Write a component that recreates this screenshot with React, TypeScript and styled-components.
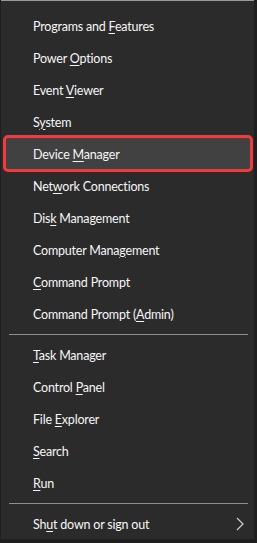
import React from "react";
import styled, { createGlobalStyle } from "styled-components";

const Global = createGlobalStyle`
  html, body { margin: 0; padding: 0; background: #1f1f1f; }
  body { width: 257px; height: 543px; overflow: hidden; }
`;

const Menu = styled.nav`
  width: 253px;
  height: 539px;
  margin-left: 1px;
  box-sizing: border-box;
  background: #2b2b2b;
  border-top: 1px solid #9a9a9a;
  padding-top: 9px;
  display: flex;
  flex-direction: column;
  font-family: Lato, "Segoe UI", sans-serif;
  font-size: 12.5px;
  letter-spacing: -0.2px;
  color: #f6f6f6;
`;

const Item = styled.div<{ $active?: boolean }>`
  position: relative;
  height: 32px;
  flex: 0 0 32px;
  display: flex;
  align-items: center;
  padding-left: 32px;
  padding-right: 10px;
  justify-content: space-between;
  &::before {
    content: "";
    display: ${(p) => (p.$active ? "block" : "none")};
    position: absolute;
    top: -3px;
    bottom: -2px;
    left: 2px;
    right: 1px;
    background: #414141;
    border: 3px solid #f03b3e;
    border-radius: 5px;
  }
`;

const Label = styled.span`
  position: relative;
  white-space: nowrap;
  u { text-underline-offset: 2px; text-decoration-thickness: 1px; }
`;

const Separator = styled.hr`
  border: 0;
  height: 1px;
  background: #8e8e8e;
  margin: 4px 6px 4px 8px;
  flex: 0 0 1px;
`;

const Chevron = () => (
  <svg width="8" height="14" viewBox="0 0 8 14">
    <path d="M1 1 L7 7 L1 13" fill="none" stroke="#cfcfcf" strokeWidth="1.2" />
  </svg>
);

type Entry = { pre: string; key: string; post: string; active?: boolean; more?: boolean } | "sep";

const entries: Entry[] = [
  { pre: "Programs and ", key: "F", post: "eatures" },
  { pre: "Power ", key: "O", post: "ptions" },
  { pre: "Event ", key: "V", post: "iewer" },
  { pre: "S", key: "y", post: "stem" },
  { pre: "Device ", key: "M", post: "anager", active: true },
  { pre: "Net", key: "w", post: "ork Connections" },
  { pre: "Dis", key: "k", post: " Management" },
  { pre: "Computer Mana", key: "g", post: "ement" },
  { pre: "", key: "C", post: "ommand Prompt" },
  { pre: "Command Prompt (", key: "A", post: "dmin)" },
  "sep",
  { pre: "", key: "T", post: "ask Manager" },
  { pre: "Control ", key: "P", post: "anel" },
  { pre: "File ", key: "E", post: "xplorer" },
  { pre: "", key: "S", post: "earch" },
  { pre: "", key: "R", post: "un" },
  "sep",
  { pre: "Sh", key: "u", post: "t down or sign out", more: true },
];

export default function App() {
  return (
    <>
      <Global />
      <Menu>
        {entries.map((e, i) =>
          e === "sep" ? (
            <Separator key={i} />
          ) : (
            <Item key={i} $active={e.active}>
              <Label>
                {e.pre}
                <u>{e.key}</u>
                {e.post}
              </Label>
              {e.more && <Chevron />}
            </Item>
          )
        )}
      </Menu>
    </>
  );
}
